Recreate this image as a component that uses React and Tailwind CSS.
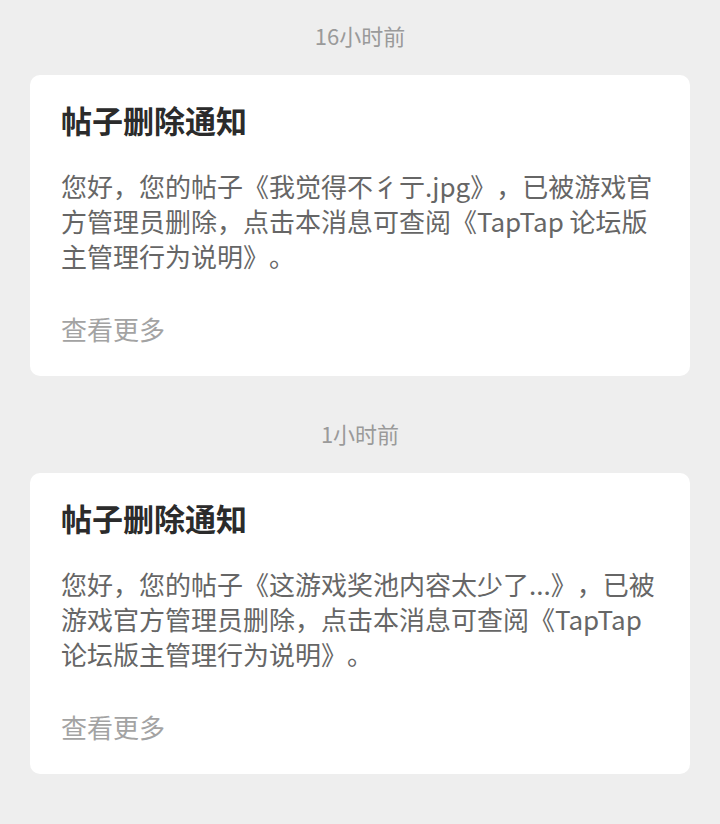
import React from 'react';

const notices = [
    {
        time: '16小时前',
        lines: [
            '您好，您的帖子《我觉得不彳亍.jpg》，已被游戏官',
            '方管理员删除，点击本消息可查阅《TapTap 论坛版',
            '主管理行为说明》。',
        ],
    },
    {
        time: '1小时前',
        lines: [
            '您好，您的帖子《这游戏奖池内容太少了...》，已被',
            '游戏官方管理员删除，点击本消息可查阅《TapTap',
            '论坛版主管理行为说明》。',
        ],
    },
];

const NoticeCard = ({ notice, first }) => {
    return (
        <div className={first ? '' : 'mt-[22px]'}>
            <div className="h-[75px] pb-[5px] flex items-center justify-center text-[22px] text-[#9a9a9a]">
                {notice.time}
            </div>
            <div className="bg-white rounded-[10px] px-[31px] pt-[25px] pb-[30px]">
                <h2 className="text-[31px] leading-[40px] font-bold text-[#2b2b2b]">帖子删除通知</h2>
                <p className="mt-[28px] text-[26px] leading-[35px] text-[#666666] whitespace-nowrap">
                    {notice.lines.map((line, i) => (
                        <span key={i} className="block">{line}</span>
                    ))}
                </p>
                <div className="mt-[38px] text-[26px] leading-[35px] text-[#a3a3a3]">查看更多</div>
            </div>
        </div>
    );
};

const App = () => {
    return (
        <div
            className="min-h-[824px] bg-[#eeeeee] px-[30px] pb-[50px] [text-spacing-trim:space-all]"
            style={{ fontFamily: '"Noto Sans CJK SC", "Noto Sans", sans-serif' }}
        >
            {notices.map((n, i) => (
                <NoticeCard key={i} notice={n} first={i === 0} />
            ))}
        </div>
    );
};

export default App;
